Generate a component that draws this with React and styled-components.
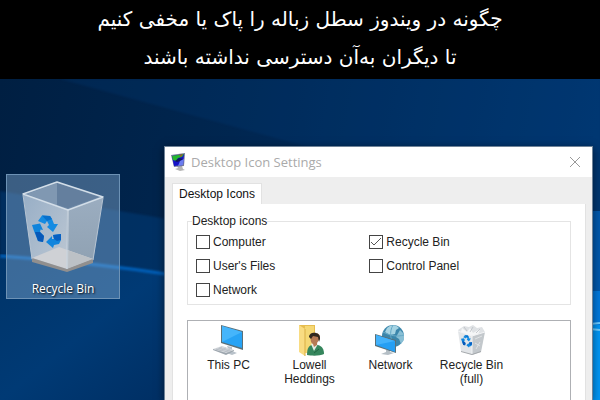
import React from "react";
import styled, { createGlobalStyle } from "styled-components";

const GlobalStyle = createGlobalStyle`
    * {
        box-sizing: border-box;
    }
    body {
        margin: 0;
        background-color: #002a58;
        font-family: "Liberation Sans", Arial, sans-serif;
        font-size: 12px;
        color: #222;
    }
`;
const Page = styled.div`
    min-height: 100vh;
    display: flex;
    flex-direction: column;
`;
const Banner = styled.header`
    padding: 0 16px 3px;
    background-color: #000;
    color: #fff;
    text-align: center;
`;
const Headline = styled.h1`
    margin: 0;
    font-family: "DejaVu Sans", sans-serif;
    font-size: 20px;
    font-weight: 400;
    line-height: 38px;
`;
const Desktop = styled.main`
    position: relative;
    flex: 1;
    display: flex;
    align-items: flex-start;
    gap: 44px;
    padding: 67px 7px 0 6px;
    overflow: hidden;
`;
const Wallpaper = styled.svg`
    position: absolute;
    inset: 0;
    width: 100%;
    height: 100%;
`;
const DesktopIcon = styled.button`
    position: relative;
    width: 114px;
    flex: none;
    display: flex;
    flex-direction: column;
    align-items: center;
    gap: 7px;
    margin: 28px 0 0;
    padding: 6px 0 0;
    border: 1px solid #6d92b5;
    background-color: rgba(140, 180, 220, 0.42);
    color: #fff;
    font-family: "Open Sans", "Noto Sans", sans-serif;
    font-size: 12px;
    line-height: 18px;
    text-shadow: 1px 1px 2px #000;
`;
const Window = styled.section`
    position: relative;
    flex: 1;
    align-self: stretch;
    min-width: 0;
    display: flex;
    flex-direction: column;
    border: 1px solid #6f8398;
    border-bottom: 0;
    background-color: #eee;
    box-shadow: 0 2px 8px rgba(0, 0, 0, 0.5);
`;
const TitleBar = styled.div`
    display: flex;
    align-items: center;
    gap: 4px;
    height: 30px;
    padding: 0 11px 0 6px;
    background-color: #fff;
`;
const WindowTitle = styled.h2`
    flex: 1;
    margin: 0;
    color: #aaa;
    font-family: "Open Sans", "Noto Sans", sans-serif;
    font-size: 13px;
    font-weight: 400;
`;
const CloseButton = styled.button`
    display: flex;
    padding: 0;
    border: 0;
    background: none;
`;
const WindowBody = styled.div`
    flex: 1;
    display: flex;
    flex-direction: column;
    padding: 6px 6px 0 7px;
`;
const Tab = styled.button`
    align-self: flex-start;
    padding: 0 6px;
    border: 1px solid #e2e2e2;
    border-bottom: 0;
    background-color: #fff;
    color: #111;
    font: inherit;
    line-height: 20px;
`;
const TabPanel = styled.div`
    flex: 1;
    display: flex;
    flex-direction: column;
    gap: 15px;
    padding: 10px 14px 0;
    border: 1px solid #e2e2e2;
    border-width: 0 1px;
    background-color: #fff;
`;
const Group = styled.fieldset`
    min-width: 0;
    margin: 0;
    padding: 2px 8px;
    border: 1px solid #e4e4e4;
`;
const Legend = styled.legend`
    margin-left: -4px;
    padding: 0;
    line-height: 14px;
`;
const Options = styled.div`
    display: grid;
    grid-template-columns: 9fr 10fr;
`;
const Option = styled.label`
    display: flex;
    align-items: center;
    gap: 3px;
    height: 24px;
`;
const Checkbox = styled.input`
    appearance: none;
    width: 14px;
    height: 14px;
    margin: 0;
    border: 1px solid #444;
    background-color: #fff;

    &:checked {
        background-image: url("data:image/svg+xml,%3Csvg xmlns='http://www.w3.org/2000/svg' viewBox='0 0 12 12'%3E%3Cpath d='M1 6l3 3 7-7' fill='none' stroke='%23555' stroke-width='1'/%3E%3C/svg%3E");
    }
`;
const IconList = styled.ul`
    flex: 1;
    display: flex;
    margin: 0;
    padding: 4px 0 0;
    border: 1px solid #aeb0b4;
    border-bottom: 0;
    list-style: none;
`;
const IconItem = styled.li`
    width: 81px;
    display: flex;
    flex-direction: column;
    align-items: center;
    gap: 1px;
    line-height: 14px;
    text-align: center;
`;
const IconLabel = styled.span`
    max-width: 66px;
`;

const RecycleMark = () => (
    <g>
        <path d="M6 6l4-5.500 8 .5 2 3 2 5h4l-5 8-6-5 2-2-2-4-2 3z" fill="#148be2" />
        <path d="M10 .5l8 .5 2 3-5 2z" fill="#0870cc" />
        <path d="M0 10l8-1.500 3 6.500-2.500-.5-.5 2.500 4 4-1 6-5-1-4-10z" fill="#0f84dc" />
        <path d="M3 17l5 0 4 4-1 6-5-1z" fill="#0758b8" />
        <path d="M14 27l6-6v3l2 0-1-4 8-1v6l-2 4-5 1-1 3z" fill="#1185dd" />
        <path d="M21 20l8-1v6l-4 1-3-2z" fill="#0860c2" />
    </g>
);

const BigBin = () => (
    <svg width="82" height="92" viewBox="0 0 82 92" aria-hidden="true">
        <defs>
            <linearGradient id="binLeft" x2="1" y2="1">
                <stop offset="0" stopColor="#97aec6" />
                <stop offset="1" stopColor="#bec8d3" />
            </linearGradient>
            <linearGradient id="binRight" x2="0" y2="1">
                <stop offset="0" stopColor="#9badc0" />
                <stop offset="1" stopColor="#8ea0b1" />
            </linearGradient>
        </defs>
        <path d="M1 13L46 29l-1 61-35-11z" fill="url(#binLeft)" />
        <path d="M46 29l35-13-10 64-26 10z" fill="url(#binRight)" />
        <path d="M1 13L35 1l46 15-35 13z" fill="#6f8aa8" />
        <path d="M35 2v23L5 13z" fill="#8098b2" />
        <path d="M35 2l42 14-31 11-11-3z" fill="#647f9e" />
        <path d="M10 77l27-11 34 12-26 10z" fill="#cfd1d5" />
        <path d="M45 69l26 9-26 10z" fill="#bcc1c6" />
        <path d="M10 77l35 11 26-10v4l-26 9-35-10z" fill="#918f8e" />
        <path d="M46 29l-1 59" stroke="#cbd5df" strokeWidth="2" opacity=".7" />
        <path d="M1 13L35 1l46 15-35 13z" fill="none" stroke="#d3dee8" strokeWidth="1.500" strokeLinejoin="round" />
        <path d="M1 14l9 64M81 17l-10 62" stroke="#b7c4d2" strokeWidth="1" />
        <g transform="translate(10 34)">
            <RecycleMark />
        </g>
    </svg>
);

const DisplayIcon = () => (
    <svg width="16" height="18" viewBox="0 0 16 18" aria-hidden="true">
        <path d="M6 13h5l1 3 2 1-5 1-5-2 3-1z" fill="#b5b5b5" />
        <path d="M0 2l14-2-1 13-10 1z" fill="#777d99" />
        <path d="M1 3l12-2-1 11-9 1z" fill="#1613c9" />
        <path d="M1 3l12-2-2 3-4 1-2 3-3-1z" fill="#25b82c" />
        <path d="M4 8l4-3 4 1-3 2-3 1z" fill="#111a5c" />
        <path d="M9 8l4-2-1 6-5 1z" fill="#6c7df0" />
        <path d="M8 2l4-1-2 3z" fill="#a5552a" />
    </svg>
);

const Screen = ({ children }) => (
    <svg width="32" height="32" viewBox="0 0 32 32" aria-hidden="true">
        {children}
    </svg>
);

const PcIcon = () => (
    <Screen>
        <path d="M14 21l5 1v4l5 2-5 2-8-3 5-1z" fill="#b9c2ca" />
        <path d="M8 0l22 6v19L8 18z" fill="#5b7078" />
        <path d="M9 1l20 6v16L9 17z" fill="#27a3f5" />
        <path d="M9 1l20 6L9 17z" fill="#45b5fb" />
        <path d="M0 24l9-3 12 4-8 4z" fill="#d4d8dc" />
        <path d="M0 24l13 4 8-3v1l-8 4-13-5z" fill="#9da6ae" />
        <path d="M3 24l13 3M6 23l12 3M9 22l-6 3M13 23l-7 3M17 24l-7 4" stroke="#aeb6bd" strokeWidth=".6" />
    </Screen>
);

const UserIcon = () => (
    <Screen>
        <path d="M5 0h16v28H10z" fill="#e6bd4f" />
        <path d="M11 1h9v27h-9z" fill="#f5d875" />
        <path d="M5 0l6 4v27l-6-4z" fill="#f9dc82" />
        <path d="M11 4v27" stroke="#d9af47" />
        <path d="M13 30c0-7 2-10 6-10h5c4 1 6 4 6 9-4 2-12 2-17 1z" fill="#36865d" />
        <path d="M17 19l2-1h4l1 1-4 7z" fill="#e5ece4" />
        <path d="M17 11c0-4 8-4 9 0l-1 4-2 3v2l-3 2-1-3c-2-1-3-4-2-8z" fill="#b67a54" />
        <path d="M15 12c0-6 12-6 11 2l-1 3-1-5-5-1-2 3z" fill="#302820" />
        <path d="M20 28l5-4" stroke="#236444" />
    </Screen>
);

const NetworkIcon = () => (
    <Screen>
        <circle cx="18" cy="11" r="11" fill="#3b86ab" />
        <path d="M12 3c5-4 9-3 12 0l-3 2-1 4-5 1-5-3z" fill="#a5d3e3" />
        <path d="M25 5l4 4v6l-3 4-2-5-3-2z" fill="#89bfd5" />
        <path d="M8 7c8 4 14 5 21 3M18 0c-4 7-3 16 3 22" fill="none" stroke="#66a9c6" />
        <path d="M11 25h4v2l4 1-6 2-7-1 5-2z" fill="#b4bec5" />
        <path d="M0 9l21 6v13L0 21z" fill="#5a7078" />
        <path d="M1 10l19 6v11L1 20z" fill="#249ff4" />
        <path d="M1 10l19 6L1 20z" fill="#42b2fb" />
    </Screen>
);

const FullBinIcon = () => (
    <Screen>
        <path d="M2 5l6-4 5 1 4-2 4 3 5-1 3 5-12 5L3 8z" fill="#dfe2e5" />
        <path d="M6 3l5 4 3-4 3 5 7-4-2 6-8 1-9-4z" fill="#f5f6f7" />
        <path d="M8 2l3 4M17 2l-3 5M24 4l-4 4" stroke="#b4b9be" strokeWidth=".7" />
        <path d="M2 6l14 5v19L5 26z" fill="#e2e5e8" />
        <path d="M16 11l13-4-4 20-9 3z" fill="#c3c8cc" />
        <path d="M2 6l14 5 13-4M16 11v19" fill="none" stroke="#f3f4f6" />
        <path d="M5 26l11 3 9-3v1l-9 3-11-3z" fill="#a3a7ab" />
        <path d="M19 14l7-3M19 18l5 3M20 24l4-7" stroke="#e0e3e5" />
        <g transform="translate(5 10) scale(.38)">
            <RecycleMark />
        </g>
    </Screen>
);

const options = [
    { label: "Computer" },
    { label: "Recycle Bin", checked: true },
    { label: "User's Files" },
    { label: "Control Panel" },
    { label: "Network" },
];

const icons = [
    { label: "This PC", Icon: PcIcon },
    { label: "Lowell Heddings", Icon: UserIcon },
    { label: "Network", Icon: NetworkIcon },
    { label: "Recycle Bin (full)", Icon: FullBinIcon },
];

const DesktopWallpaper = () => (
    <Wallpaper viewBox="0 0 600 321" preserveAspectRatio="none" aria-hidden="true">
        <defs>
            <linearGradient id="base" x2="1" y2=".1">
                <stop offset="0" stopColor="#001f42" />
                <stop offset=".4" stopColor="#002650" />
                <stop offset="1" stopColor="#003670" />
            </linearGradient>
            <linearGradient id="floor" x2="1" y2="1">
                <stop offset="0" stopColor="#003468" />
                <stop offset=".5" stopColor="#003a75" />
                <stop offset="1" stopColor="#002e62" />
            </linearGradient>
            <filter id="soft">
                <feGaussianBlur stdDeviation="1" />
            </filter>
        </defs>
        <rect width="600" height="321" fill="url(#base)" />
        <path d="M60 0l270 74h270V0z" fill="#003a78" opacity=".25" filter="url(#soft)" />
        <path d="M0 112l180 30v60L0 178z" fill="#003a76" opacity=".55" filter="url(#soft)" />
        <path d="M0 178q90 6 180 20v123H0z" fill="url(#floor)" />
        <path d="M0 177q90 6 180 20" fill="none" stroke="#0062bd" strokeWidth="3" filter="url(#soft)" />
        <path d="M580 132h20v80h-20z" fill="#0058ac" />
        <path d="M580 212h20v34h-20z" fill="#0078dc" />
        <path d="M580 246h20v75h-20z" fill="#0095f4" />
        <path d="M590 245l10-1M590 250l10 1" stroke="#6ccbff" strokeWidth="2" />
    </Wallpaper>
);

const App = () => {
    return (
        <Page>
            <GlobalStyle />
            <Banner>
                <Headline lang="fa" dir="rtl">
                    چگونه در ویندوز سطل زباله را پاک یا مخفی کنیم
                    <br />
                    تا دیگران به‌آن دسترسی نداشته باشند
                </Headline>
            </Banner>
            <Desktop>
                <DesktopWallpaper />
                <DesktopIcon type="button">
                    <BigBin />
                    Recycle Bin
                </DesktopIcon>
                <Window aria-label="Desktop Icon Settings">
                    <TitleBar>
                        <DisplayIcon />
                        <WindowTitle>Desktop Icon Settings</WindowTitle>
                        <CloseButton type="button" aria-label="Close">
                            <svg width="12" height="12" viewBox="0 0 12 12" stroke="#999">
                                <path d="M1 1l10 10M11 1L1 11" />
                            </svg>
                        </CloseButton>
                    </TitleBar>
                    <WindowBody>
                        <Tab type="button">Desktop Icons</Tab>
                        <TabPanel>
                            <Group>
                                <Legend>Desktop icons</Legend>
                                <Options>
                                    {options.map(({ label, checked }) => (
                                        <Option key={label}>
                                            <Checkbox type="checkbox" defaultChecked={checked} />
                                            {label}
                                        </Option>
                                    ))}
                                </Options>
                            </Group>
                            <IconList>
                                {icons.map(({ label, Icon }) => (
                                    <IconItem key={label}>
                                        <Icon />
                                        <IconLabel>{label}</IconLabel>
                                    </IconItem>
                                ))}
                            </IconList>
                        </TabPanel>
                    </WindowBody>
                </Window>
            </Desktop>
        </Page>
    );
};

export default App;
